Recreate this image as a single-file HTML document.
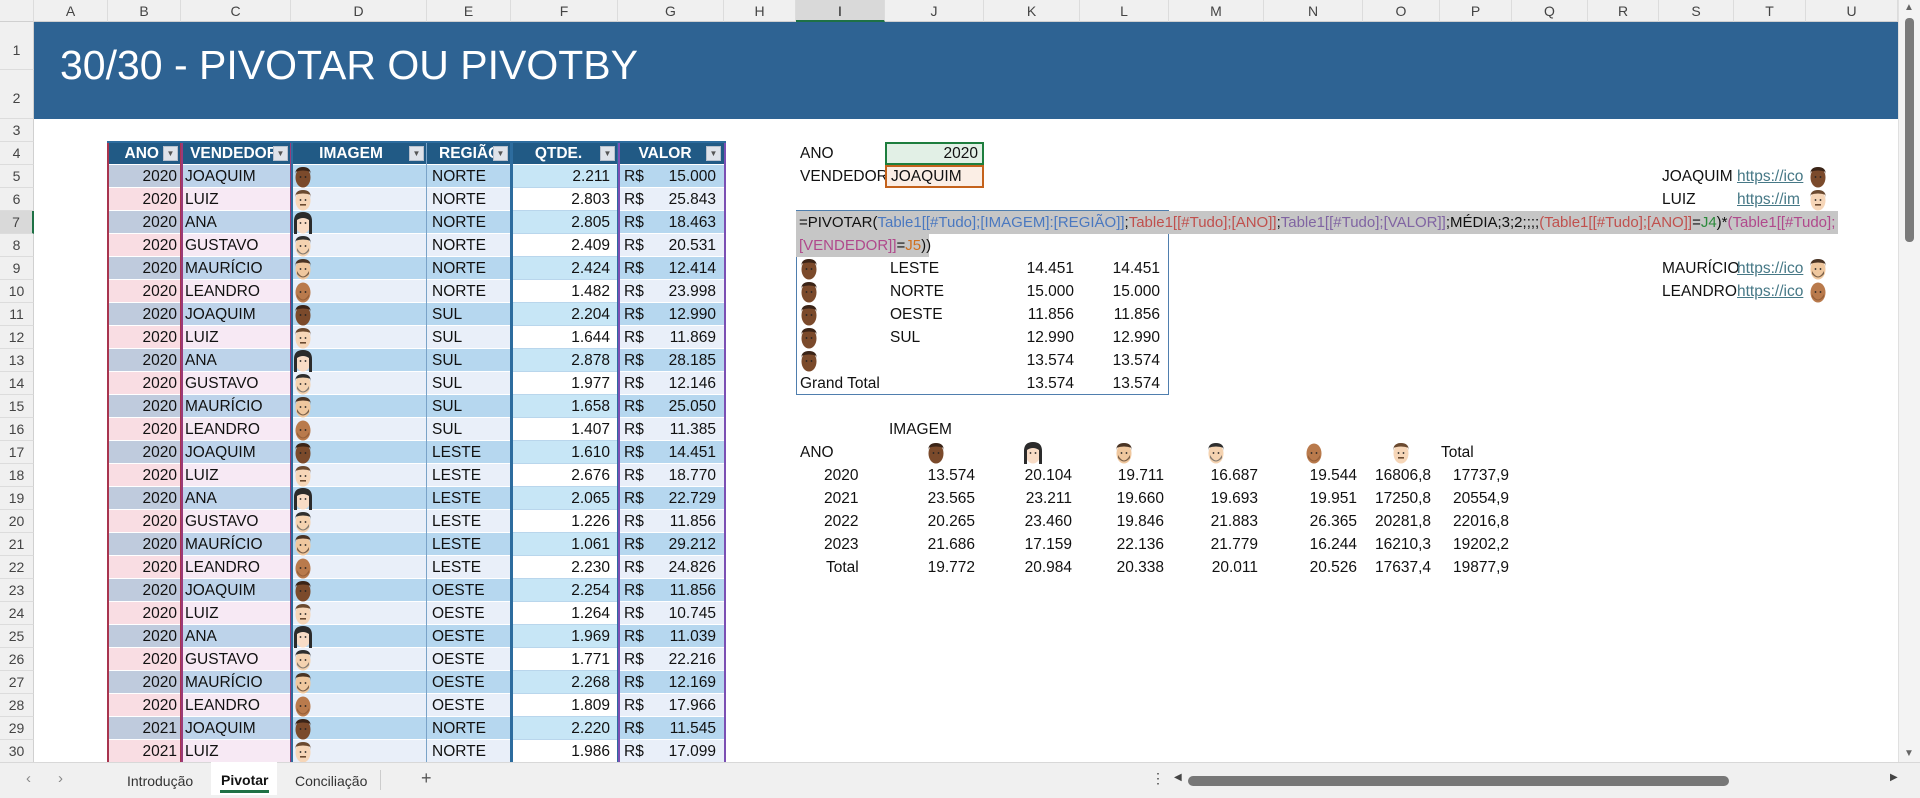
<!DOCTYPE html>
<html><head><meta charset="utf-8">
<style>
*{box-sizing:border-box;margin:0;padding:0}
body{width:1920px;height:798px;overflow:hidden;background:#fff;font-family:"Liberation Sans Narrow","Liberation Sans",sans-serif;font-size:15.5px;color:#111;position:relative}
.a{position:absolute;white-space:nowrap}
.ch{position:absolute;top:0;height:22px;background:#f0f0f0;color:#444;font-size:14px;text-align:center;line-height:22px;border-right:1px solid #dcdcdc;border-bottom:1px solid #d0d0d0}
.rh{position:absolute;left:0;width:34px;background:#f0f0f0;color:#444;font-size:14px;text-align:center;border-bottom:1px solid #dcdcdc;border-right:1px solid #d0d0d0}
.c{position:absolute;height:23px;line-height:23px;padding:0 4px;overflow:hidden;border-bottom:1px solid #fff;white-space:nowrap}
.r{text-align:right}
.hd{background:#215a85;color:#fff;font-weight:bold;text-align:center}
.fb{position:absolute;width:15px;height:15px;background:#dfe3ea;border:1px solid #b8c0cc;font-size:8px;color:#555;line-height:13px;text-align:center;font-weight:normal}
.lk{color:#467886;text-decoration:underline}
</style></head><body>
<div id="g"></div>
<script>
var g=document.getElementById('g');var H='';
var cols=[['',0,34],['A',34,108],['B',108,181],['C',181,291],['D',291,427],['E',427,511],['F',511,618],['G',618,724],['H',724,796],['I',796,885],['J',885,984],['K',984,1080],['L',1080,1169],['M',1169,1264],['N',1264,1363],['O',1363,1440],['P',1440,1512],['Q',1512,1588],['R',1588,1659],['S',1659,1734],['T',1734,1806],['U',1806,1898]];
cols.forEach(function(c){var sel=c[0]=='I';H+='<div class="ch" style="left:'+c[1]+'px;width:'+(c[2]-c[1])+'px;'+(sel?'background:#d9d9d9;border-bottom:2px solid #1e7145;color:#222':'')+'">'+c[0]+'</div>';});
function ty(r){if(r==1)return 22;if(r==2)return 70;if(r==3)return 119;return 142+(r-4)*23;}
function ht(r){if(r==1)return 48;if(r==2)return 49;return 23;}
for(var r=1;r<=30;r++){var sel=r==7;H+='<div class="rh" style="top:'+ty(r)+'px;height:'+ht(r)+'px;line-height:'+(r<3?ht(r)+8:23)+'px;'+(sel?'background:#d9d9d9;border-right:2px solid #1e7145':'')+'">'+r+'</div>';}
H+='<div class="a" style="left:34px;top:22px;width:1864px;height:97px;background:#2e6393"></div>';
H+='<div class="a" style="left:60px;top:42px;color:#fff;font-family:\'Liberation Sans\',sans-serif;font-size:41px">30/30 - PIVOTAR OU PIVOTBY</div>';
function face(t,x,y){var s={d:['#7b4a2b','#3b2417'],l:['#f6d6b8','#6b4a30'],a:['#f8dcc6','#2b2b2b'],g:['#f4d2b0','#2e2e2e'],m:['#efc79e','#4a3424'],e:['#b97a4c','#8a5532']}[t];
var hair=t=='e'?'':'<path d="M1 9 Q1 1 9 1 Q17 1 17 9 L17 6 Q9 3 1 6Z" fill="'+s[1]+'"/>';
if(t=='a')hair='<path d="M0 22 L0 9 Q0 0 9 0 Q18 0 18 9 L18 22 L15 22 L15 8 Q9 4 3 8 L3 22Z" fill="'+s[1]+'"/>';
var ex='';if(t=='l')ex='<rect x="6" y="15" width="6" height="1.6" fill="#6b4a30"/>';if(t=='m'||t=='e'||t=='g')ex='<path d="M3 13 Q9 24 15 13 L15 16 Q9 23 3 16Z" fill="'+(t=='g'?'#555':s[1])+'" opacity=".7"/>';
return '<svg class="a" style="left:'+x+'px;top:'+y+'px" width="18" height="22" viewBox="0 0 18 22"><ellipse cx="9" cy="11.5" rx="7.5" ry="10" fill="'+s[0]+'"/>'+hair+'<circle cx="6.5" cy="11" r="0.9" fill="#222"/><circle cx="11.5" cy="11" r="0.9" fill="#222"/>'+ex+'</svg>';}
var names=['JOAQUIM','LUIZ','ANA','GUSTAVO','MAURÍCIO','LEANDRO'],ft=['d','l','a','g','m','e'];
var data=[['NORTE','2.211','15.000'],['NORTE','2.803','25.843'],['NORTE','2.805','18.463'],['NORTE','2.409','20.531'],['NORTE','2.424','12.414'],['NORTE','1.482','23.998'],['SUL','2.204','12.990'],['SUL','1.644','11.869'],['SUL','2.878','28.185'],['SUL','1.977','12.146'],['SUL','1.658','25.050'],['SUL','1.407','11.385'],['LESTE','1.610','14.451'],['LESTE','2.676','18.770'],['LESTE','2.065','22.729'],['LESTE','1.226','11.856'],['LESTE','1.061','29.212'],['LESTE','2.230','24.826'],['OESTE','2.254','11.856'],['OESTE','1.264','10.745'],['OESTE','1.969','11.039'],['OESTE','1.771','22.216'],['OESTE','2.268','12.169'],['OESTE','1.809','17.966'],['NORTE','2.220','11.545'],['NORTE','1.986','17.099']];
var y4=142;
function hcell(x,w,t,bx,st){H+='<div class="c hd" style="left:'+x+'px;top:'+y4+'px;width:'+w+'px;'+st+'">'+t+'</div>';if(bx)H+='<div class="fb" style="left:'+bx+'px;top:'+(y4+4)+'px">&#9660;</div>';}
hcell(108,73,'ANO',163,'text-align:right;padding-right:22px');hcell(181,110,'VENDEDOR',273,'padding-right:8px');hcell(291,136,'IMAGEM',409,'padding-right:20px');hcell(427,84,'REGIÃO',493,'padding-left:12px;text-align:left');hcell(511,107,'QTDE.',600,'padding-right:16px');hcell(618,106,'VALOR',706,'padding-right:16px');
for(var i=0;i<26;i++){var r=i+5,y=ty(r),o=(r%2==1);var k=i%6;
H+='<div class="c r" style="left:108px;top:'+y+'px;width:73px;background:'+(o?'#bfcbdd':'#f9dde3')+'">'+(r>=29?'2021':'2020')+'</div>';
H+='<div class="c" style="left:181px;top:'+y+'px;width:110px;background:'+(o?'#bdd3ea':'#f7e9f4')+'">'+names[k]+'</div>';
H+='<div class="c" style="left:291px;top:'+y+'px;width:136px;background:'+(o?'#b6d7ef':'#e9eff9')+'"></div>';
H+=face(ft[k],294,y+1);
H+='<div class="c" style="left:427px;top:'+y+'px;width:84px;background:'+(o?'#b6d7ef':'#e9eff9')+';padding-left:5px">'+data[i][0]+'</div>';
H+='<div class="c r" style="left:511px;top:'+y+'px;width:107px;background:'+(o?'#c7e6f6':'#fff')+';border-bottom-color:#b9d6ec;padding-right:8px">'+data[i][1]+'</div>';
H+='<div class="c" style="left:618px;top:'+y+'px;width:106px;background:'+(o?'#b6d7ef':'#e9eff9')+';padding:0 8px 0 6px">R$<span style="float:right">'+data[i][2]+'</span></div>';}
function vb(x,c){H+='<div class="a" style="left:'+x+'px;top:141px;width:2px;height:622px;background:'+c+'"></div>';}
vb(107,'#a8344e');vb(180,'#a8344e');vb(181,'#9b3a78');vb(290,'#9b3a78');vb(291,'#2d6c9e');vb(510,'#2d6c9e');vb(511,'#2d6c9e');vb(617,'#2d6c9e');vb(618,'#7b4fb3');vb(724,'#7b4fb3');
H+='<div class="a" style="left:426px;top:141px;width:1px;height:622px;background:#7aa3c8"></div>';
H+='<div class="a" style="left:107px;top:141px;width:619px;height:2px;background:#2d6c9e"></div>';
H+='<div class="a" style="left:800px;top:142px;line-height:23px">ANO</div><div class="a" style="left:800px;top:165px;line-height:23px">VENDEDOR</div>';
H+='<div class="a" style="left:885px;top:142px;width:99px;height:23px;background:#e2f0e6;border:2px solid #1e7e3e;text-align:right;padding-right:4px;line-height:20px">2020</div>';
H+='<div class="a" style="left:885px;top:165px;width:99px;height:23px;background:#fbeee5;border:2px solid #c4621c;padding-left:4px;line-height:20px">JOAQUIM</div>';
H+='<div class="a" style="left:796px;top:210px;width:373px;height:185px;border:1px solid #4f7eae"></div>';
H+='<div class="a" style="left:796px;top:211px;width:1042px;height:23px;background:#c6c6c6"></div><div class="a" style="left:796px;top:234px;width:133px;height:23px;background:#c6c6c6"></div>';
var B='#4a78c0',R='#c0504d',P='#8064a2',M='#b0498c',Gc='#2a8a3a',O='#d07020';
H+='<div class="a" style="left:799px;top:211px;line-height:23px;font-size:15px;letter-spacing:0px">=PIVOTAR(<span style="color:'+B+'">Table1[[#Tudo];[IMAGEM]:[REGIÃO]]</span>;<span style="color:'+R+'">Table1[[#Tudo];[ANO]]</span>;<span style="color:'+P+'">Table1[[#Tudo];[VALOR]]</span>;MÉDIA;3;2;;;;<span style="color:'+R+'">(Table1[[#Tudo];[ANO]]</span>=<span style="color:'+Gc+'">J4</span>)*<span style="color:'+M+'">(Table1[[#Tudo];</span></div>';
H+='<div class="a" style="left:799px;top:234px;line-height:23px;font-size:15px"><span style="color:'+M+'">[VENDEDOR]]</span>=<span style="color:'+O+'">J5</span>))</div>';
var pv=[['LESTE','14.451'],['NORTE','15.000'],['OESTE','11.856'],['SUL','12.990'],['','13.574']];
pv.forEach(function(p,j){var y=ty(9+j);H+=face('d',800,y+1);H+='<div class="a" style="left:890px;top:'+y+'px;line-height:23px">'+p[0]+'</div><div class="a" style="left:984px;width:90px;top:'+y+'px;line-height:23px;text-align:right">'+p[1]+'</div><div class="a" style="left:1080px;width:80px;top:'+y+'px;line-height:23px;text-align:right">'+p[1]+'</div>';});
var y14=ty(14);H+='<div class="a" style="left:800px;top:'+y14+'px;line-height:23px">Grand Total</div><div class="a" style="left:984px;width:90px;top:'+y14+'px;line-height:23px;text-align:right">13.574</div><div class="a" style="left:1080px;width:80px;top:'+y14+'px;line-height:23px;text-align:right">13.574</div>';
[[5,'JOAQUIM','https://ico','d'],[6,'LUIZ','https://im','l'],[9,'MAURÍCIO','https://ico','m'],[10,'LEANDRO','https://ico','e']].forEach(function(q){var y=ty(q[0]);H+='<div class="a" style="left:1662px;top:'+y+'px;line-height:23px">'+q[1]+'</div><div class="a lk" style="left:1737px;top:'+y+'px;line-height:23px;width:70px;overflow:hidden">'+q[2]+'</div>'+face(q[3],1809,y+1);});
H+='<div class="a" style="left:889px;top:'+ty(16)+'px;line-height:23px">IMAGEM</div><div class="a" style="left:800px;top:'+ty(17)+'px;line-height:23px">ANO</div><div class="a" style="left:1441px;top:'+ty(17)+'px;line-height:23px">Total</div>';
var fx=[927,1024,1115,1207,1305,1392],fo=['d','a','m','g','e','l'];fx.forEach(function(x,j){H+=face(fo[j],x,ty(17)+1);});
var ends=[975,1072,1164,1258,1357,1431,1509];
var lp=[['2020','13.574','20.104','19.711','16.687','19.544','16806,8','17737,9'],['2021','23.565','23.211','19.660','19.693','19.951','17250,8','20554,9'],['2022','20.265','23.460','19.846','21.883','26.365','20281,8','22016,8'],['2023','21.686','17.159','22.136','21.779','16.244','16210,3','19202,2'],['Total','19.772','20.984','20.338','20.011','20.526','17637,4','19877,9']];
lp.forEach(function(row,j){var y=ty(18+j);H+='<div class="a" style="left:'+(row[0]=='Total'?826:824)+'px;top:'+y+'px;line-height:23px">'+row[0]+'</div>';for(var k=1;k<8;k++){H+='<div class="a" style="left:'+(ends[k-1]-90)+'px;width:90px;text-align:right;top:'+y+'px;line-height:23px">'+row[k]+'</div>';}});
H+='<div class="a" style="left:1898px;top:0;width:22px;height:762px;background:#f3f3f3;border-left:1px solid #e0e0e0"></div><div class="a" style="left:1904px;top:2px;font-size:10px;color:#666">&#9650;</div><div class="a" style="left:1904px;top:748px;font-size:10px;color:#666">&#9660;</div><div class="a" style="left:1905px;top:18px;width:9px;height:224px;background:#7a7a7a;border-radius:4px"></div>';
H+='<div class="a" style="left:0;top:762px;width:1920px;height:36px;background:#f0f0f0;border-top:1px solid #d8d8d8"></div>';
H+='<div class="a" style="left:26px;top:770px;color:#888;font-size:15px">&#8249;</div><div class="a" style="left:58px;top:770px;color:#888;font-size:15px">&#8250;</div>';
H+='<div class="a" style="left:127px;top:773px;font-size:14px;color:#333">Introdução</div>';
H+='<div class="a" style="left:211px;top:762px;width:66px;height:33px;background:#fff"></div><div class="a" style="left:221px;top:772px;font-size:14px;font-weight:bold;color:#111">Pivotar</div><div class="a" style="left:220px;top:790px;width:49px;height:3px;background:#1e7145"></div>';
H+='<div class="a" style="left:295px;top:773px;font-size:14px;color:#333">Conciliação</div><div class="a" style="left:380px;top:770px;width:1px;height:20px;background:#ccc"></div><div class="a" style="left:421px;top:768px;font-size:18px;color:#555">+</div>';
H+='<div class="a" style="left:1151px;top:770px;font-size:14px;color:#444">&#8942;</div><div class="a" style="left:1174px;top:772px;font-size:10px;color:#444">&#9664;</div><div class="a" style="left:1188px;top:776px;width:541px;height:10px;background:#777;border-radius:5px"></div><div class="a" style="left:1890px;top:772px;font-size:10px;color:#444">&#9654;</div>';
g.innerHTML=H;
</script>
</body></html>
